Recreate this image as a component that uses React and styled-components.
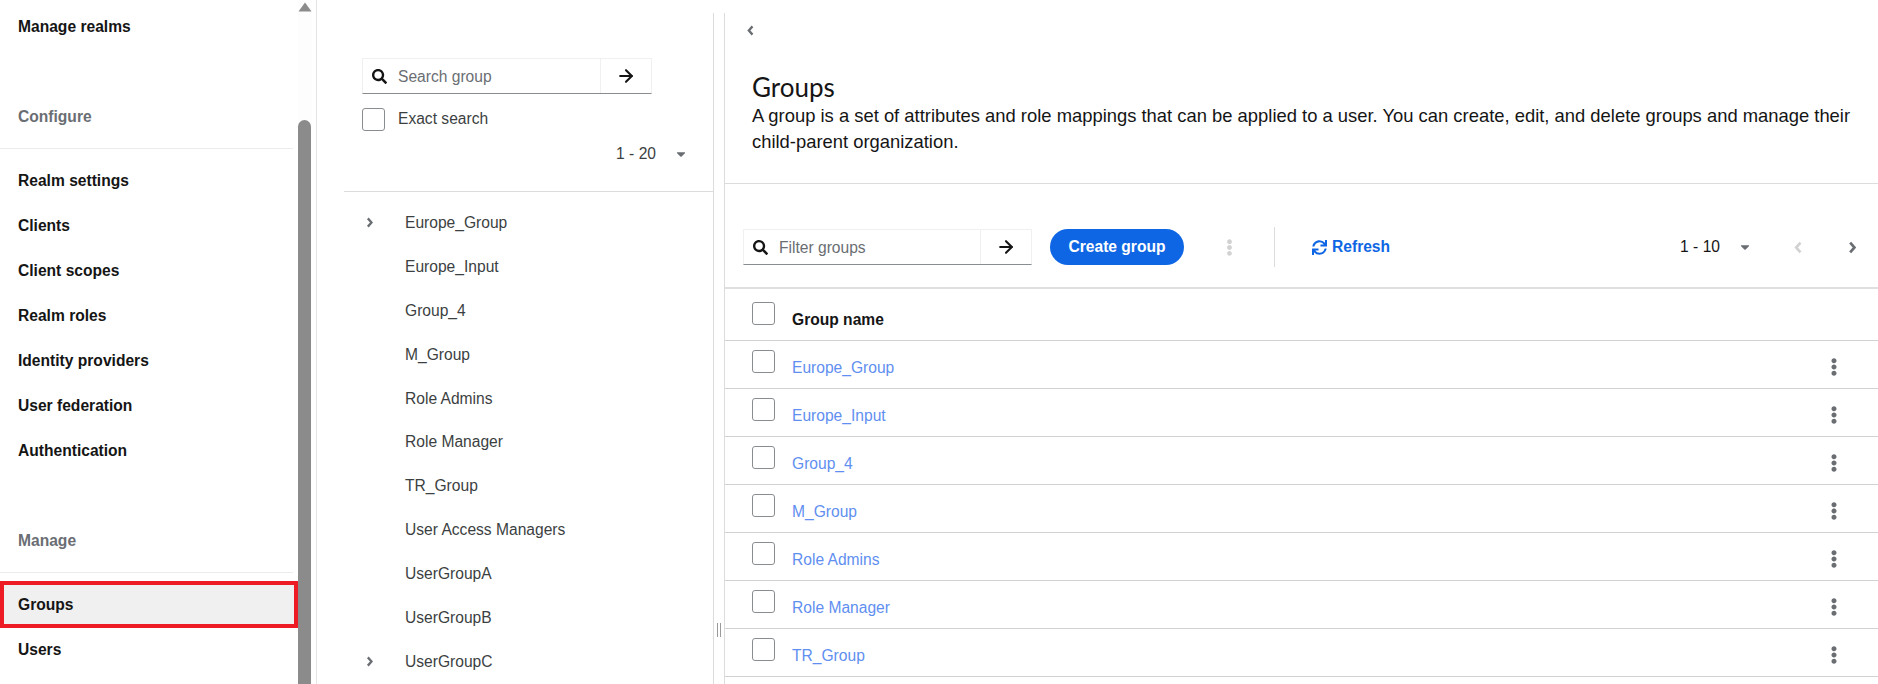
import React from "react";
import styled, { createGlobalStyle } from "styled-components";
import { FaSearch, FaCaretDown, FaEllipsisV, FaSync } from "react-icons/fa";
import { ArrowRight } from "lucide-react";

const configureItems = ["Realm settings", "Clients", "Client scopes", "Realm roles", "Identity providers", "User federation", "Authentication"];
const treeGroups = [
  { name: "Europe_Group", nested: true },
  { name: "Europe_Input" },
  { name: "Group_4" },
  { name: "M_Group" },
  { name: "Role Admins" },
  { name: "Role Manager" },
  { name: "TR_Group" },
  { name: "User Access Managers" },
  { name: "UserGroupA" },
  { name: "UserGroupB" },
  { name: "UserGroupC", nested: true },
];
const tableGroups = ["Europe_Group", "Europe_Input", "Group_4", "M_Group", "Role Admins", "Role Manager", "TR_Group"];

const GlobalStyle = createGlobalStyle`
  html, body {
    margin: 0;
    height: 100%;
    overflow: hidden;
    background: #fff;
  }
  body {
    font-family: "Liberation Sans", Arial, sans-serif;
    color: #151515;
  }
  * {
    box-sizing: border-box;
  }
`;

const Page = styled.div`
  display: flex;
  width: 1878px;
  height: 684px;
  overflow: hidden;
`;

const Sidebar = styled.aside`
  display: flex;
  flex: 0 0 317px;
  height: 100%;
  border-right: 1px solid #e4e4e4;
`;

const Nav = styled.nav`
  flex: 0 0 298px;
  padding-top: 4px;
`;

const NavItem = styled.div`
  display: flex;
  align-items: center;
  height: ${(p) => (p.$active ? "47px" : "45px")};
  margin: ${(p) => (p.$active ? "-1px 0" : "0")};
  padding-left: ${(p) => (p.$active ? "14px" : "18px")};
  border: ${(p) => (p.$active ? "4px solid #ed1c24" : "none")};
  background: ${(p) => (p.$active ? "#f0f0f0" : "transparent")};
  font-size: 15.6px;
  font-weight: 700;
  color: #151515;
`;

const SectionTitle = styled.div`
  margin: 58px 5px 9px 0;
  padding: 0 0 21px 18px;
  line-height: 20px;
  border-bottom: 1px solid #ececec;
  font-size: 15.6px;
  font-weight: 700;
  color: #6a6e73;
`;

const Scrollbar = styled.div`
  display: flex;
  flex-direction: column;
  align-items: flex-start;
  flex: 0 0 14px;
  background: #fdfdfd;
  svg {
    margin-top: 2px;
  }
`;

const ScrollThumb = styled.div`
  flex: 1;
  width: 13px;
  margin-top: 108px;
  border-radius: 7px 7px 0 0;
  background: #8b8b8b;
`;

const Workspace = styled.main`
  display: flex;
  flex: 1;
  padding-top: 13px;
  min-width: 0;
`;

const TreePanel = styled.section`
  flex: 0 0 397px;
  padding: 45px 0 0 27px;
  border-right: 1px solid #dcdcdc;
`;

const SearchBox = styled.div`
  display: flex;
  align-items: stretch;
  width: ${(p) => p.$width}px;
  height: 36px;
  margin-left: ${(p) => p.$offset || 0}px;
  border: 1px solid #f0f0f0;
  border-bottom: 1px solid #8a8d90;
`;

const SearchField = styled.div`
  display: flex;
  flex: 1;
  align-items: center;
  gap: 11px;
  padding-left: 9px;
  font-size: 15.6px;
  color: #6a6e73;
  svg {
    color: #151515;
    font-size: 15px;
  }
  span {
    padding-top: 1px;
  }
`;

const SearchGo = styled.div`
  display: flex;
  align-items: center;
  justify-content: center;
  flex: 0 0 51px;
  border-left: 1px solid #f0f0f0;
  color: #151515;
`;

const ExactRow = styled.label`
  display: flex;
  align-items: flex-start;
  gap: 13px;
  margin: 14px 0 0 18px;
  font-size: 15.6px;
  line-height: 22px;
  color: #3c3f42;
`;

const Checkbox = styled.span`
  display: block;
  flex: 0 0 23px;
  width: 23px;
  height: 23px;
  border: 1px solid #8a8d90;
  border-radius: 3px;
  background: #fff;
`;

const TreePager = styled.div`
  display: flex;
  justify-content: flex-end;
  align-items: center;
  gap: 18px;
  height: 20px;
  margin: 13px 25px 0 0;
  font-size: 15.6px;
  color: #3c3f42;
  svg {
    color: #6a6e73;
    font-size: 14px;
  }
`;

const TreeList = styled.ul`
  list-style: none;
  margin: 27px 0 0;
  padding: 9px 0 0;
  border-top: 1px solid #dcdcdc;
`;

const TreeRow = styled.li`
  display: flex;
  align-items: center;
  height: 43.9px;
  padding-left: 19px;
  font-size: 15.6px;
  color: #3c3f42;
`;

const TreeToggle = styled.span`
  display: flex;
  align-items: center;
  flex: 0 0 42px;
  padding-left: 3px;
  color: #6a6e73;
`;

const Splitter = styled.div`
  display: flex;
  justify-content: center;
  gap: 2px;
  flex: 0 0 11px;
  padding-top: 610px;
  border-right: 1px solid #dcdcdc;
`;

const GripLine = styled.span`
  width: 1px;
  height: 14px;
  background: #9a9a9a;
`;

const ContentPanel = styled.section`
  flex: 1;
  min-width: 0;
`;

const BackRow = styled.div`
  display: flex;
  align-items: center;
  height: 34px;
  padding-left: 22px;
  color: #6a6e73;
`;

const Header = styled.header`
  padding: 27px 20px 28px 27px;
  border-bottom: 1px solid #dcdcdc;
`;

const Title = styled.h1`
  margin: 0;
  font-family: Lato, "Liberation Sans", sans-serif;
  font-size: 26px;
  font-weight: 400;
  line-height: 27px;
  color: #151515;
`;

const Description = styled.p`
  margin: 2px 0 0;
  font-size: 18.4px;
  line-height: 26px;
  color: #151515;
`;

const Toolbar = styled.div`
  display: flex;
  align-items: center;
  height: 105px;
  padding: 23px 0 0 18px;
  border-bottom: 2px solid #dfdfdf;
`;

const CreateButton = styled.button`
  height: 36px;
  width: 134px;
  margin-left: 18px;
  border: none;
  border-radius: 18px;
  background: #0e66e4;
  color: #fff;
  font-family: inherit;
  font-size: 15.6px;
  font-weight: 700;
`;

const KebabSlot = styled.span`
  display: flex;
  justify-content: center;
  width: ${(p) => p.$width}px;
  font-size: 17px;
  color: #d2d2d2;
`;

const ToolbarDivider = styled.span`
  width: 1px;
  height: 40px;
  margin-right: 37px;
  background: #dcdcdc;
`;

const RefreshLink = styled.span`
  display: flex;
  align-items: center;
  gap: 5px;
  font-size: 15.6px;
  font-weight: 700;
  color: #0e66e4;
  svg {
    font-size: 15px;
  }
`;

const Pager = styled.div`
  display: flex;
  align-items: center;
  margin-left: auto;
  font-size: 15.6px;
  color: #151515;
`;

const PagerCaret = styled.span`
  display: flex;
  margin: 0 36px 0 18px;
  color: #6a6e73;
  font-size: 14px;
`;

const PagerArrow = styled.span`
  display: flex;
  justify-content: center;
  width: 20px;
  margin-right: ${(p) => p.$gap}px;
  color: ${(p) => (p.$muted ? "#d2d2d2" : "#6a6e73")};
`;

const TableRow = styled.div`
  display: flex;
  align-items: flex-start;
  height: ${(p) => (p.$head ? "52px" : "48px")};
  padding: ${(p) => (p.$head ? "13px" : "9px")} 0 0 27px;
  border-bottom: 1px solid #d2d2d2;
`;

const CellText = styled.span`
  flex: 1;
  margin: 8px 0 0 17px;
  line-height: 20px;
  font-size: 15.6px;
  font-weight: ${(p) => (p.$head ? 700 : 400)};
  color: ${(p) => (p.$head ? "#151515" : "#5f8ff0")};
`;

const RowMenu = styled.span`
  display: flex;
  margin: 8px 35px 0 0;
  font-size: 18px;
  color: #6a6e73;
`;

// chevron heavier than the icon-package ones at this size
function Chevron({ left, height = 11 }) {
  return (
    <svg width={(height * 8) / 12} height={height} viewBox="0 0 8 12" fill="none" stroke="currentColor" strokeWidth="2.5">
      <path d={left ? "M6 1.5 L2 6 L6 10.5" : "M2 1.5 L6 6 L2 10.5"} />
    </svg>
  );
}

function Search({ label, width, offset }) {
  return (
    <SearchBox $width={width} $offset={offset}>
      <SearchField>
        <FaSearch />
        <span>{label}</span>
      </SearchField>
      <SearchGo>
        <ArrowRight size={20} strokeWidth={2.5} />
      </SearchGo>
    </SearchBox>
  );
}

export default function App() {
  return (
    <>
      <GlobalStyle />
      <Page>
        <Sidebar>
          <Nav>
            <NavItem>Manage realms</NavItem>
            <SectionTitle>Configure</SectionTitle>
            {configureItems.map((item) => (
              <NavItem key={item}>{item}</NavItem>
            ))}
            <SectionTitle>Manage</SectionTitle>
            <NavItem $active>Groups</NavItem>
            <NavItem>Users</NavItem>
          </Nav>
          <Scrollbar>
            <svg width="14" height="10" viewBox="0 0 14 10">
              <path d="M7 0.5 L13.5 9.5 L0.5 9.5 Z" fill="#8b8b8b" />
            </svg>
            <ScrollThumb />
          </Scrollbar>
        </Sidebar>
        <Workspace>
          <TreePanel>
            <Search label="Search group" width={290} offset={18} />
            <ExactRow>
              <Checkbox />
              <span>Exact search</span>
            </ExactRow>
            <TreePager>
              <span>1 - 20</span>
              <FaCaretDown />
            </TreePager>
            <TreeList>
              {treeGroups.map((group) => (
                <TreeRow key={group.name}>
                  <TreeToggle>{group.nested && <Chevron />}</TreeToggle>
                  {group.name}
                </TreeRow>
              ))}
            </TreeList>
          </TreePanel>
          <Splitter>
            <GripLine />
            <GripLine />
          </Splitter>
          <ContentPanel>
            <BackRow>
              <Chevron left />
            </BackRow>
            <Header>
              <Title>Groups</Title>
              <Description>
                A group is a set of attributes and role mappings that can be applied to a user. You can create, edit, and delete groups and manage their child-parent organization.
              </Description>
            </Header>
            <Toolbar>
              <Search label="Filter groups" width={289} />
              <CreateButton>Create group</CreateButton>
              <KebabSlot $width={90}>
                <FaEllipsisV />
              </KebabSlot>
              <ToolbarDivider />
              <RefreshLink>
                <FaSync />
                Refresh
              </RefreshLink>
              <Pager>
                <span>1 - 10</span>
                <PagerCaret>
                  <FaCaretDown />
                </PagerCaret>
                <PagerArrow $muted $gap={34}>
                  <Chevron left height={13} />
                </PagerArrow>
                <PagerArrow $gap={16}>
                  <Chevron height={13} />
                </PagerArrow>
              </Pager>
            </Toolbar>
            <TableRow $head>
              <Checkbox />
              <CellText $head>Group name</CellText>
            </TableRow>
            {tableGroups.map((name) => (
              <TableRow key={name}>
                <Checkbox />
                <CellText>{name}</CellText>
                <RowMenu>
                  <FaEllipsisV />
                </RowMenu>
              </TableRow>
            ))}
          </ContentPanel>
        </Workspace>
      </Page>
    </>
  );
}
